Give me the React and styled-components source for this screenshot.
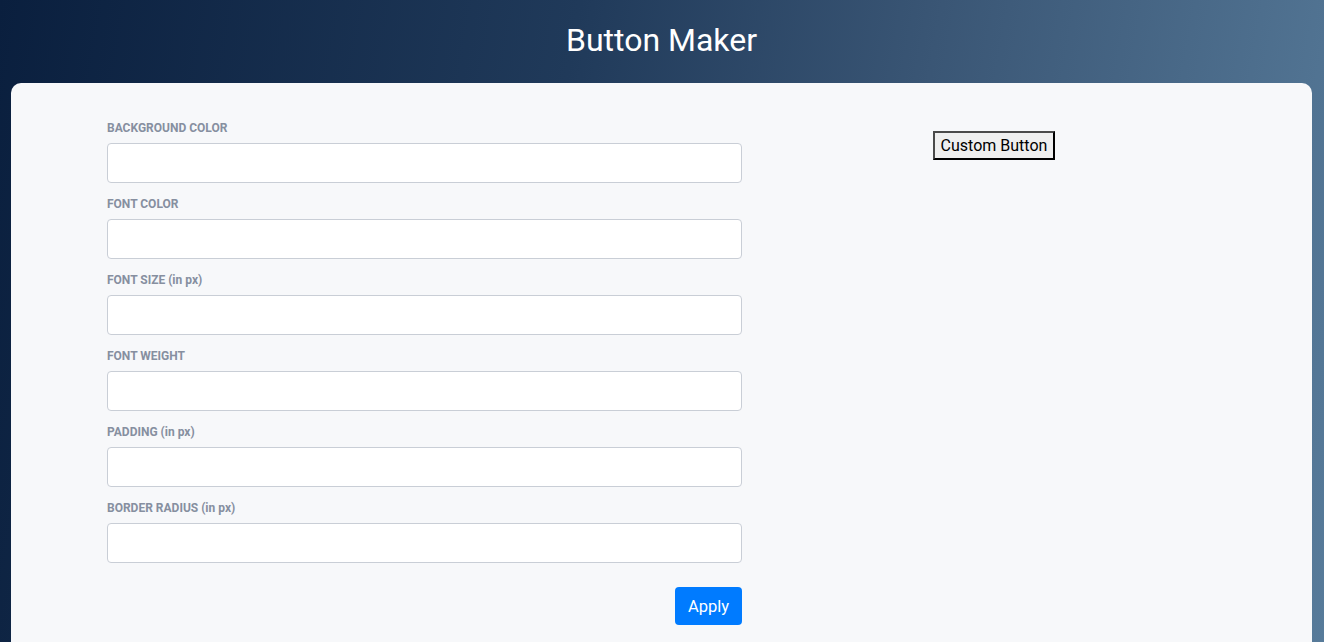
import React, { useState } from "react";
import styled, { createGlobalStyle } from "styled-components";

const fields = [
  { key: "bg", label: "BACKGROUND COLOR" },
  { key: "color", label: "FONT COLOR" },
  { key: "size", label: "FONT SIZE (in px)" },
  { key: "weight", label: "FONT WEIGHT" },
  { key: "padding", label: "PADDING (in px)" },
  { key: "radius", label: "BORDER RADIUS (in px)" },
];

export default function App() {
  const [values, setValues] = useState({});

  return (
    <>
      <GlobalStyle />
      <StyledPage>
        <StyledHeader>
          <h1>Button Maker</h1>
        </StyledHeader>
        <StyledCard>
          <StyledForm onSubmit={(e) => e.preventDefault()}>
            {fields.map((f) => (
              <StyledField key={f.key}>
                <StyledLabel>{f.label}</StyledLabel>
                <StyledInput
                  value={values[f.key] || ""}
                  onChange={(e) => setValues({ ...values, [f.key]: e.target.value })}
                />
              </StyledField>
            ))}
            <StyledActions>
              <StyledApply type="submit">Apply</StyledApply>
            </StyledActions>
          </StyledForm>
          <StyledPreview>
            <StyledCustom>Custom Button</StyledCustom>
          </StyledPreview>
        </StyledCard>
      </StyledPage>
    </>
  );
}

const GlobalStyle = createGlobalStyle`
  html, body {
    margin: 0;
    height: 100%;
    overflow: hidden;
  }
  body {
    font-family: Roboto, "Liberation Sans", sans-serif;
  }
`;

const StyledPage = styled.div`
  min-height: 100vh;
  background: linear-gradient(100deg, #0a1f3e 0%, #203a5a 40%, #3a5675 65%, #587c9b 100%);
  padding: 0 12px 0 11px;
`;

const StyledHeader = styled.header`
  height: 83px;
  display: flex;
  align-items: center;
  justify-content: center;
  h1 {
    margin: 0;
    padding-bottom: 3px;
    color: #ffffff;
    font-size: 32px;
    font-weight: 400;
  }
`;

const StyledCard = styled.main`
  background: #f7f8fa;
  border-radius: 10px 10px 0 0;
  min-height: 600px;
  padding: 37px 66px 0 96px;
  display: flex;
  align-items: flex-start;
`;

const StyledForm = styled.form`
  width: 635px;
`;

const StyledField = styled.div`
  margin-bottom: 13px;
`;

const StyledLabel = styled.label`
  display: block;
  font-size: 12px;
  font-weight: 700;
  line-height: 15px;
  color: #868fa0;
  padding-top: 1px;
  margin-bottom: 7px;
`;

const StyledInput = styled.input`
  display: block;
  box-sizing: border-box;
  width: 100%;
  height: 40px;
  border: 1px solid #c9ced6;
  border-radius: 4px;
  background: #ffffff;
  padding: 6px 12px;
  font-family: inherit;
  font-size: 16px;
  outline: none;
`;

const StyledActions = styled.div`
  display: flex;
  justify-content: flex-end;
  padding-top: 11px;
`;

const StyledApply = styled.button`
  background: #007bff;
  color: #ffffff;
  border: none;
  border-radius: 4px;
  height: 38px;
  padding: 0 13px;
  font-family: inherit;
  font-size: 16.5px;
  cursor: pointer;
`;

const StyledPreview = styled.div`
  flex: 1;
  display: flex;
  justify-content: center;
  padding-top: 11px;
`;

const StyledCustom = styled.button`
  background: #efefef;
  color: #000000;
  border: 2px solid;
  border-color: #4a4a4a #000 #000 #4a4a4a;
  padding: 3px 6px;
  font-family: inherit;
  font-size: 16px;
`;
